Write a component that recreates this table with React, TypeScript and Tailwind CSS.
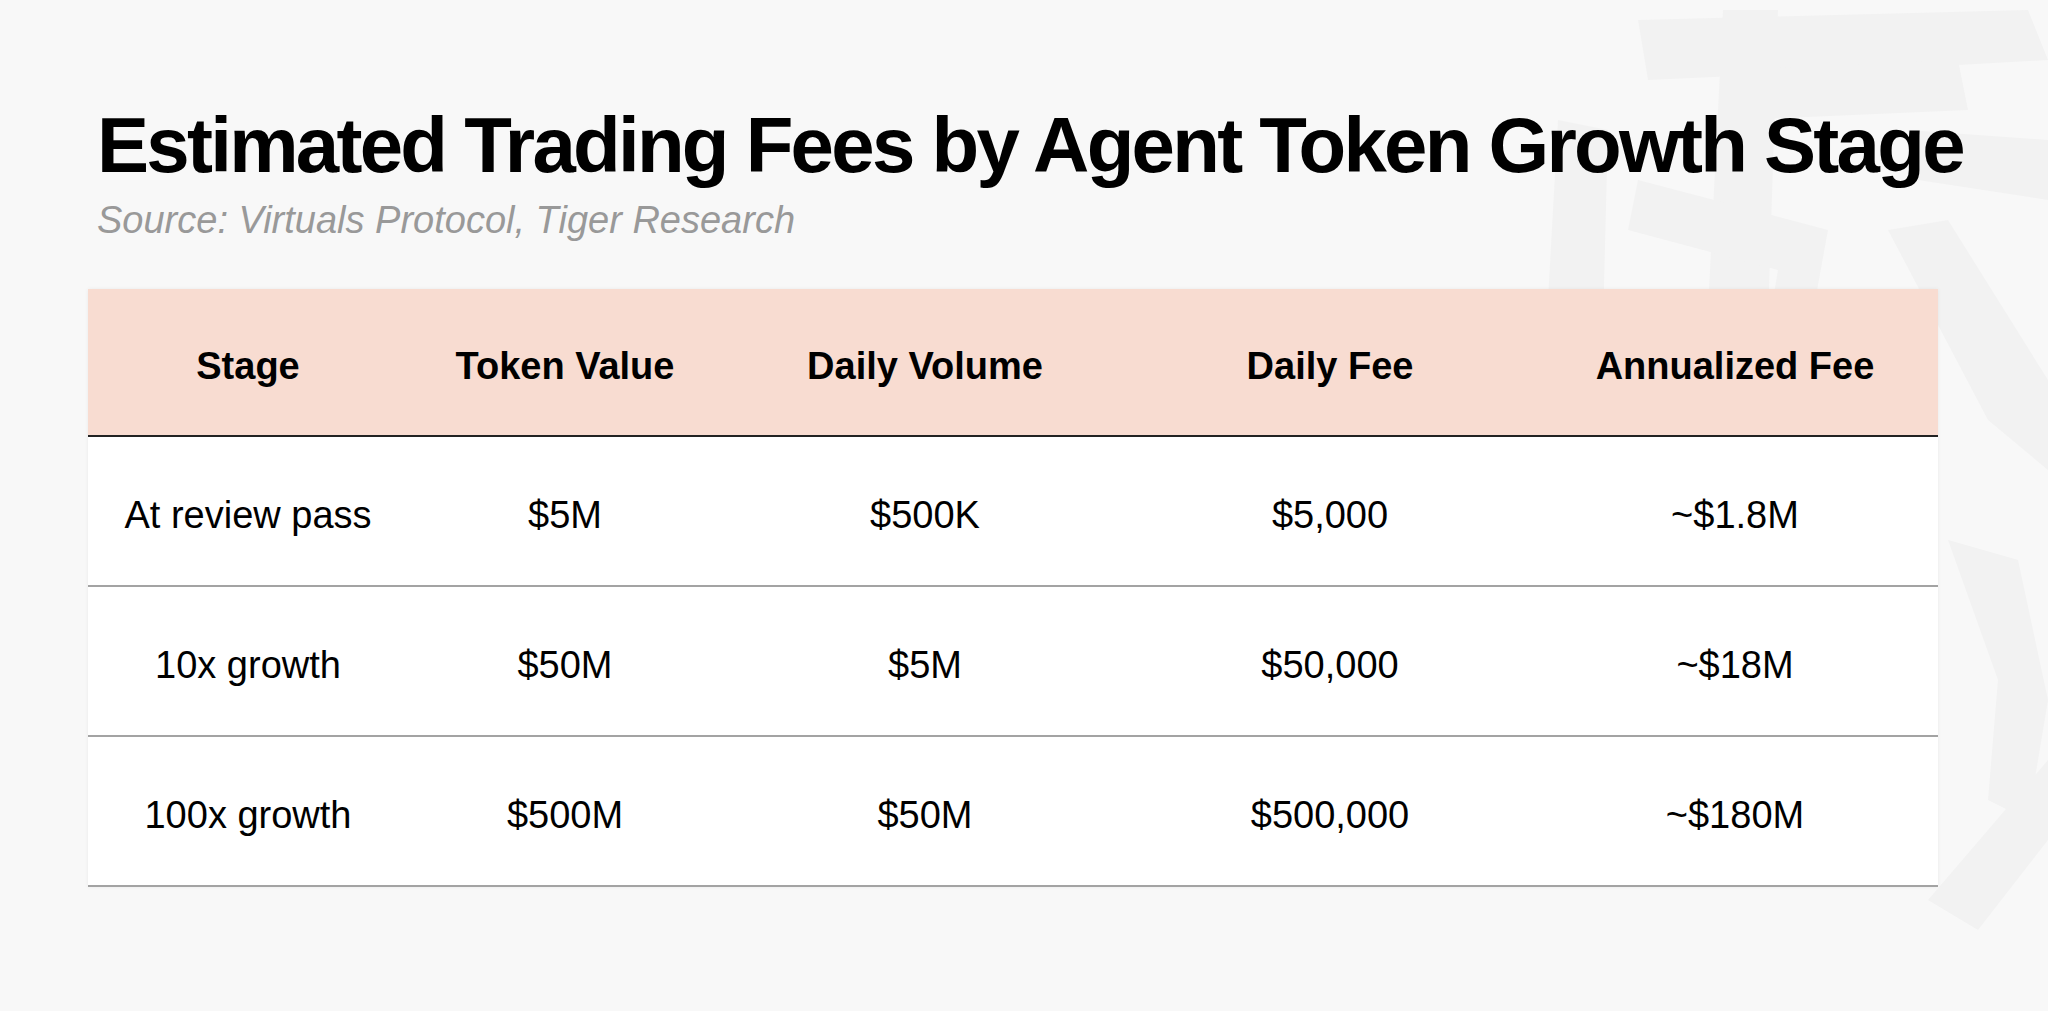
import React from "react";

const cols = ["Stage", "Token Value", "Daily Volume", "Daily Fee", "Annualized Fee"];

const rows = [
  ["At review pass", "$5M", "$500K", "$5,000", "~$1.8M"],
  ["10x growth", "$50M", "$5M", "$50,000", "~$18M"],
  ["100x growth", "$500M", "$50M", "$500,000", "~$180M"],
];

const grid = "grid grid-cols-[320px_314px_406px_404px_406px]";

// faint brush-stroke watermark on the right
const Watermark = () => (
  <svg
    className="pointer-events-none absolute right-0 top-0 h-[1011px] w-[560px]"
    viewBox="0 0 560 1011"
    fill="#f2f2f2"
  >
    <polygon points="150,20 540,10 560,60 380,70 160,80" />
    <polygon points="240,70 470,60 480,110 250,120" />
    <polygon points="235,10 290,10 280,320 220,310" />
    <polygon points="70,120 120,130 110,520 80,520 60,300" />
    <polygon points="150,180 340,230 320,340 280,330 290,270 140,230" />
    <polygon points="420,130 560,140 560,200 430,180" />
    <polygon points="400,230 460,220 560,380 560,470 500,420" />
    <polygon points="460,540 530,560 560,700 540,820 500,800 510,680" />
    <polygon points="440,900 500,830 560,760 560,840 490,930" />
  </svg>
);

export default function App() {
  return (
    <div
      className="relative h-[1011px] w-[2048px] overflow-hidden bg-[#f8f8f8]"
      style={{ fontFamily: '"Liberation Sans", Arial, sans-serif' }}
    >
      <Watermark />
      <div className="relative pl-[97px] pt-[106px]">
        <h1 className="text-[78px] font-bold leading-none tracking-[-0.035em] text-black">
          Estimated Trading Fees by Agent Token Growth Stage
        </h1>
        <p className="mt-[17px] text-[38px] italic leading-none text-[#999999]">
          Source: Virtuals Protocol, Tiger Research
        </p>
      </div>

      <div className="relative ml-[88px] mt-[50px] w-[1850px] bg-white shadow-[0_0_4px_rgba(0,0,0,0.06)]">
        <div className={`${grid} h-[148px] items-center border-b-2 border-[#222222] bg-[#f8dcd1]`}>
          {cols.map((c) => (
            <div key={c} className="pt-[9px] text-center text-[38px] font-bold text-black">
              {c}
            </div>
          ))}
        </div>
        {rows.map((r) => (
          <div key={r[0]} className={`${grid} h-[150px] items-center border-b-2 border-[#a3a3a3]`}>
            {r.map((v, i) => (
              <div key={i} className="pt-[9px] text-center text-[38px] text-black">
                {v}
              </div>
            ))}
          </div>
        ))}
      </div>
    </div>
  );
}
